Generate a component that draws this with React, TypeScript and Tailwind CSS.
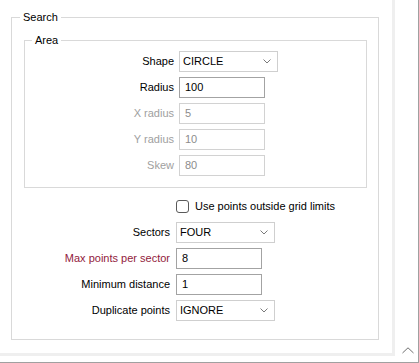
import React from "react";

type Row = {
  label: string;
  value: string;
  kind: "combo" | "input";
  disabled?: boolean;
  warn?: boolean;
};

const areaRows: Row[] = [
  { label: "Shape", value: "CIRCLE", kind: "combo" },
  { label: "Radius", value: "100", kind: "input" },
  { label: "X radius", value: "5", kind: "input", disabled: true },
  { label: "Y radius", value: "10", kind: "input", disabled: true },
  { label: "Skew", value: "80", kind: "input", disabled: true },
];

const searchRows: Row[] = [
  { label: "Sectors", value: "FOUR", kind: "combo" },
  { label: "Max points per sector", value: "8", kind: "input", warn: true },
  { label: "Minimum distance", value: "1", kind: "input" },
  { label: "Duplicate points", value: "IGNORE", kind: "combo" },
];

const Chevron = () => (
  <svg width="8" height="5" viewBox="0 0 8 5" className="shrink-0">
    <polyline points="0.5,0.5 4,4 7.5,0.5" fill="none" stroke="#7a7a7a" strokeWidth="1" />
  </svg>
);

const Field: React.FC<{ row: Row }> = ({ row }) => {
  if (row.kind === "combo") {
    return (
      <div className="flex h-[21px] w-[99px] items-center justify-between border border-[#cfcfcf] bg-white pl-[3px] pr-[6px]">
        <span className="text-black">{row.value}</span>
        <Chevron />
      </div>
    );
  }
  return (
    <div
      className={`flex h-[21px] w-[86px] items-center bg-white pl-[5px] ${
        row.disabled ? "border border-[#d2d2d2] text-[#8c8c8c]" : "border border-[#a3a3a3] text-black"
      }`}
    >
      {row.value}
    </div>
  );
};

const FieldRow: React.FC<{ row: Row; labelWidth: string; gap: string }> = ({ row, labelWidth, gap }) => (
  <div className={`flex h-[21px] items-center ${gap}`}>
    <span
      className={`${labelWidth} shrink-0 text-right ${
        row.disabled ? "text-[#a0a0a0]" : row.warn ? "text-[#921a3c]" : "text-black"
      }`}
    >
      {row.label}
    </span>
    <Field row={row} />
  </div>
);

export default function App() {
  return (
    <div
      className="relative h-[363px] w-[419px] overflow-hidden border-b border-r border-[#a0a0a0] bg-white text-[11px] leading-[13px] text-black"
      style={{ fontFamily: '"Liberation Sans", Arial, sans-serif' }}
    >
      <div className="h-[356px] w-[395px] border-b-[3px] border-r-[3px] border-[#efefef] pt-[11px]">
        <fieldset className="ml-[11px] w-[368px] border border-[#d9d9d9] pb-[18px]">
          <legend className="ml-[8px] px-[3px] leading-[13px]">Search</legend>

          <fieldset className="ml-[12px] mt-[10px] w-[343px] border border-[#d9d9d9] pb-[11px] pt-[4px]">
            <legend className="ml-[7px] px-[3px] leading-[13px]">Area</legend>
            <div className="flex flex-col gap-[5px]">
              {areaRows.map((row) => (
                <FieldRow key={row.label} row={row} labelWidth="w-[149px]" gap="gap-[5px]" />
              ))}
            </div>
          </fieldset>

          <div className="mt-[8px] flex flex-col gap-[5px]">
            <div className="flex h-[21px] items-center gap-[6px]">
              <span className="w-[158px] shrink-0" />
              <span className="h-[13px] w-[13px] shrink-0 rounded-[3px] border border-[#5a5a5a] bg-white" />
              <span>Use points outside grid limits</span>
            </div>
            {searchRows.map((row) => (
              <FieldRow key={row.label} row={row} labelWidth="w-[158px]" gap="gap-[6px]" />
            ))}
          </div>
        </fieldset>
      </div>

      <svg width="12" height="7" viewBox="0 0 12 7" className="absolute left-[402px] top-[347px]">
        <polyline points="0.5,6 6,0.8 11.5,6" fill="none" stroke="#6e6e6e" strokeWidth="1" />
      </svg>
    </div>
  );
}
